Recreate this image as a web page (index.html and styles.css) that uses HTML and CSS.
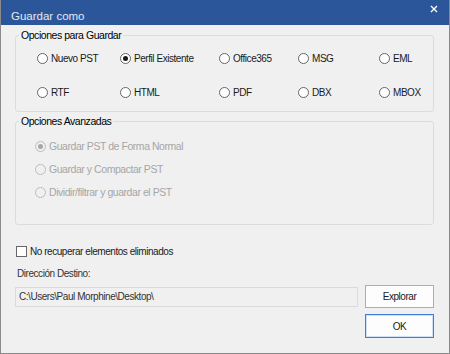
FILE: index.html
```html
<!DOCTYPE html>
<html lang="es">

<head>
    <meta charset="UTF-8">
    <meta name="viewport" content="width=device-width, initial-scale=1.0">
    <title>Guardar como</title>
    <link rel="stylesheet" href="styles.css">
</head>

<body>
    <div class="window">
        <div class="titlebar">
            <span class="title">Guardar como</span>
            <svg class="close" width="8" height="8" viewBox="0 0 8 8">
                <path d="M1 1 L7 7 M7 1 L1 7" stroke="#ffffff" stroke-width="1.4" fill="none" />
            </svg>
        </div>
        <div class="body">
            <fieldset class="group">
                <legend>Opciones para Guardar</legend>
                <div class="formats">
                    <div class="radio"><span class="dot"></span>Nuevo PST</div>
                    <div class="radio"><span class="dot checked"></span>Perfil Existente</div>
                    <div class="radio"><span class="dot"></span>Office365</div>
                    <div class="radio"><span class="dot"></span>MSG</div>
                    <div class="radio"><span class="dot"></span>EML</div>
                    <div class="radio"><span class="dot"></span>RTF</div>
                    <div class="radio"><span class="dot"></span>HTML</div>
                    <div class="radio"><span class="dot"></span>PDF</div>
                    <div class="radio"><span class="dot"></span>DBX</div>
                    <div class="radio"><span class="dot"></span>MBOX</div>
                </div>
            </fieldset>
            <fieldset class="group advanced">
                <legend>Opciones Avanzadas</legend>
                <div class="adv-list">
                    <div class="radio disabled"><span class="dot checked"></span>Guardar PST de Forma Normal</div>
                    <div class="radio disabled"><span class="dot"></span>Guardar y Compactar PST</div>
                    <div class="radio disabled"><span class="dot"></span>Dividir/filtrar y guardar el PST</div>
                </div>
            </fieldset>
            <div class="check"><span class="box"></span>No recuperar elementos eliminados</div>
            <div class="field-label">Dirección Destino:</div>
            <div class="path-row">
                <div class="path-input">C:\Users\Paul Morphine\Desktop\</div>
                <div class="btn">Explorar</div>
            </div>
            <div class="ok-row">
                <div class="btn ok">OK</div>
            </div>
        </div>
    </div>
</body>

</html>
```

FILE: styles.css
```css
body {
    margin: 0;
    background-color: #f0f0f0;
    font-family: "Liberation Sans", Arial, sans-serif;
    font-size: 10px;
    letter-spacing: -0.45px;
    color: #1a1a1a;
}

.window {
    width: 450px;
    height: 354px;
    box-sizing: border-box;
    border: 1px solid #8a8a8a;
    border-top: none;
    display: flex;
    flex-direction: column;
    background-color: #f0f0f0;
}

/* Title bar */
.titlebar {
    height: 25px;
    background-color: #2b579a;
    display: flex;
    justify-content: space-between;
    align-items: flex-start;
    padding: 0 11px 0 10px;
    box-sizing: border-box;
}

.title {
    color: #e3e9f2;
    font-size: 11.5px;
    letter-spacing: 0;
    line-height: 14px;
    margin-top: 9px;
}

.close {
    margin-top: 5px;
}

/* Content */
.body {
    flex: 1;
    display: flex;
    flex-direction: column;
    padding: 3px 15px 0 14px;
}

.group {
    margin: 0;
    padding: 0;
    border: 1px solid #dcdcdc;
    border-radius: 3px;
    min-width: 0;
}

.group legend {
    margin-left: 3px;
    padding: 0 2px;
    line-height: 14px;
    font-size: 10.5px;
    color: #000;
}

.formats {
    display: grid;
    grid-template-columns: 83px 99px 79px 81px auto;
    row-gap: 18px;
    padding: 8px 0 11px 21px;
}

.radio {
    display: flex;
    align-items: center;
    gap: 3px;
    height: 16px;
    white-space: nowrap;
}

.dot {
    width: 9px;
    height: 9px;
    border: 1px solid #666;
    border-radius: 50%;
    background-color: #fff;
    display: flex;
    justify-content: center;
    align-items: center;
    flex-shrink: 0;
}

.dot.checked::after {
    content: "";
    width: 5px;
    height: 5px;
    border-radius: 50%;
    background-color: #1a1a1a;
}

.advanced {
    margin-top: 2px;
}

.adv-list {
    display: flex;
    flex-direction: column;
    gap: 7px;
    padding: 10px 0 24px 19px;
}

.radio.disabled {
    color: #a6a6a6;
    font-size: 10.5px;
}

.radio.disabled .dot {
    border-color: #bcbcbc;
    background-color: #f0f0f0;
}

.radio.disabled .dot.checked::after {
    background-color: #a6a6a6;
}

.check {
    display: flex;
    align-items: center;
    gap: 3px;
    height: 16px;
    margin-top: 18px;
    margin-left: 1px;
}

.box {
    width: 9px;
    height: 9px;
    border: 1px solid #666;
    background-color: #fff;
}

.field-label {
    height: 16px;
    line-height: 16px;
    margin-top: 7px;
    margin-left: 2px;
    color: #333;
}

.path-row {
    display: flex;
    align-items: center;
    gap: 7px;
    margin-top: 3px;
}

.path-input {
    flex: 1;
    height: 20px;
    box-sizing: border-box;
    border: 1px solid #dadada;
    background-color: #f0f0f0;
    line-height: 18px;
    padding-left: 3px;
    color: #333;
}

.btn {
    width: 69px;
    height: 23px;
    box-sizing: border-box;
    border: 1px solid #adadad;
    background-color: #fdfdfd;
    display: flex;
    justify-content: center;
    align-items: center;
    color: #1a1a1a;
}

.ok-row {
    display: flex;
    justify-content: flex-end;
    margin-top: 6px;
}

.btn.ok {
    height: 24px;
    border-color: #3c7fd6;
    box-shadow: inset 0 0 0 1px #cde0f7;
}
```
